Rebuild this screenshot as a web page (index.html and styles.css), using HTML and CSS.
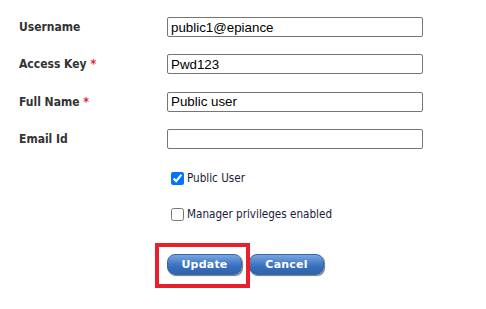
FILE: index.html
```html
<!DOCTYPE html>
<html lang="en">
<head>
  <meta charset="UTF-8" />
  <title>Edit User</title>
  <link rel="stylesheet" href="styles.css">
</head>
<body>
  <form class="user-form">
    <label class="field-label" for="username">Username</label>
    <input class="field-input" type="text" id="username" value="public1@epiance">

    <label class="field-label" for="accessKey">Access Key <span class="req">*</span></label>
    <input class="field-input" type="text" id="accessKey" value="Pwd123">

    <label class="field-label" for="fullName">Full Name <span class="req">*</span></label>
    <input class="field-input" type="text" id="fullName" value="Public user">

    <label class="field-label" for="email">Email Id</label>
    <input class="field-input" type="text" id="email" value="">

    <div class="check-row first">
      <input type="checkbox" id="publicUser" checked>
      <label for="publicUser">Public User</label>
    </div>

    <div class="check-row">
      <input type="checkbox" id="manager">
      <label for="manager">Manager privileges enabled</label>
    </div>

    <div class="actions">
      <span class="highlight-wrap">
        <button type="button" class="btn">Update</button>
        <span class="highlight"></span>
      </span>
      <button type="button" class="btn">Cancel</button>
    </div>
  </form>
</body>
</html>
```

FILE: styles.css
```css
* { box-sizing: border-box; }
html, body { height: 100%; }
body {
  margin: 0;
  background: #fff;
  font-family: "DejaVu Sans Condensed", "DejaVu Sans", sans-serif;
  color: #333;
}
.user-form {
  display: grid;
  grid-template-columns: 148px 256px;
  row-gap: 17.4px;
  padding: 17px 0 30px 19px;
  align-items: center;
}
.field-label {
  font-weight: bold;
  font-size: 12px;
  color: #333;
}
.req { color: #e8213a; }
.field-input {
  height: 20px;
  width: 256px;
  margin: 0;
  padding: 1px 3px;
  border: 1px solid #767676;
  border-radius: 2px;
  font-family: "Liberation Sans", Arial, sans-serif;
  font-size: 13.33px;
  color: #000;
}
.check-row {
  grid-column: 2;
  display: flex;
  align-items: center;
  height: 19px;
  font-size: 11.6px;
  color: #1a1a3a;
}
.check-row.first { margin-top: 2px; }
.check-row input {
  width: 13px;
  height: 13px;
  margin: 3px 3px 3px 4px;
}
.actions {
  grid-column: 2;
  display: flex;
  align-items: center;
  gap: 7px;
  margin-top: 13px;
}
.highlight-wrap {
  position: relative;
  display: block;
}
.highlight {
  position: absolute;
  left: -12px;
  top: -11px;
  width: 95px;
  height: 45px;
  border: 4px solid #e8202b;
  pointer-events: none;
}
.btn {
  display: block;
  width: 75px;
  height: 21px;
  padding: 0;
  border: 1px solid #3566a8;
  border-radius: 8px;
  background: linear-gradient(#7aa6de, #4a80c9 40%, #3870bd 60%, #2e62ac);
  box-shadow: 1px 1px 1px #777;
  color: #fff;
  font-family: "DejaVu Sans", Verdana, sans-serif;
  font-weight: bold;
  font-size: 11px;
  letter-spacing: 0.2px;
}
```
